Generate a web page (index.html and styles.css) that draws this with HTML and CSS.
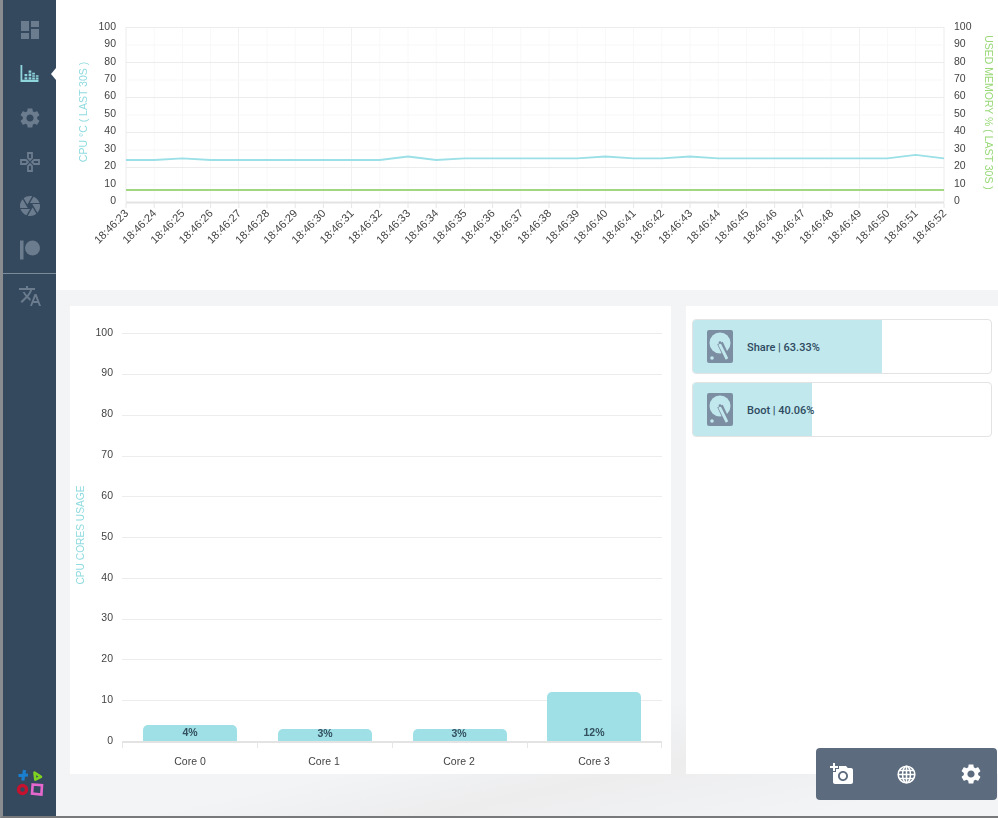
FILE: index.html
```html
<!DOCTYPE html>
<html lang="en">
<head>
    <meta charset="UTF-8">
    <meta name="viewport" content="width=device-width, initial-scale=1.0">
    <link rel="stylesheet" href="styles.css">
    <title>Monitor</title>
</head>
<body>

<div class="app">

    <nav class="sidebar">
        <ul class="menu">
            <li class="menuItem">
                <svg class="navIcon" viewBox="0 0 24 24"><path d="M3 13h8V3H3v10zm0 8h8v-6H3v6zm10 0h8V11h-8v10zm0-18v6h8V3h-8z"/></svg>
            </li>
            <li class="menuItem active">
                <svg class="navIcon" viewBox="0 0 20 20">
                    <path d="M0 0h2v16.500h18V19H0z"/>
                    <path d="M4.500 10h3v2.500h-3zM4.500 13.500h3v2.500h-3zM9 6h3v2.500H9zM9 9.500h3v3H9zM9 13.500h3v2.500H9zM13 8.500h3v2h-3zM13 11.500h3v1.500h-3zM13 14h3v2h-3zM17 11.500h3v1.500h-3zM17 14h3v2h-3z"/>
                </svg>
            </li>
            <li class="menuItem">
                <svg class="navIcon" viewBox="0 0 24 24"><path d="M19.14,12.94c0.04-0.3,0.06-0.61,0.06-0.94c0-0.32-0.02-0.64-0.07-0.94l2.03-1.58c0.18-0.14,0.23-0.41,0.12-0.61 l-1.92-3.32c-0.12-0.22-0.37-0.29-0.59-0.22l-2.39,0.96c-0.5-0.38-1.03-0.7-1.62-0.94L14.4,2.81c-0.04-0.24-0.24-0.41-0.48-0.41 h-3.84c-0.24,0-0.43,0.17-0.47,0.41L9.25,5.35C8.66,5.59,8.12,5.92,7.63,6.29L5.24,5.33c-0.22-0.08-0.47,0-0.59,0.22L2.74,8.87 C2.62,9.08,2.66,9.34,2.86,9.48l2.03,1.58C4.84,11.36,4.8,11.69,4.8,12s0.02,0.64,0.07,0.94l-2.03,1.58 c-0.18,0.14-0.23,0.41-0.12,0.61l1.92,3.32c0.12,0.22,0.37,0.29,0.59,0.22l2.39-0.96c0.5,0.38,1.03,0.7,1.62,0.94l0.36,2.54 c0.05,0.24,0.24,0.41,0.48,0.41h3.84c0.24,0,0.44-0.17,0.47-0.41l0.36-2.54c0.59-0.24,1.13-0.56,1.62-0.94l2.39,0.96 c0.22,0.08,0.47,0,0.59-0.22l1.92-3.32c0.12-0.22,0.07-0.47-0.12-0.61L19.14,12.94z M12,15.6c-1.98,0-3.6-1.62-3.6-3.6 s1.62-3.6,3.6-3.6s3.6,1.62,3.6,3.6S13.98,15.6,12,15.6z"/></svg>
            </li>
            <li class="menuItem">
                <svg class="navIcon" viewBox="0 0 24 24">
                    <path class="outline" d="M10 3h4v5l-2 2-2-2zM3 10h5l2 2-2 2H3zM10 21v-5l2-2 2 2v5zM21 10h-5l-2 2 2 2h5z"/>
                </svg>
            </li>
            <li class="menuItem">
                <svg class="navIcon" viewBox="0 0 24 24"><path d="M9.4 10.500l4.770-8.260C13.470 2.090 12.750 2 12 2c-2.400 0-4.600.85-6.320 2.250l3.660 6.350.06-.1zM21.540 9c-.92-2.920-3.150-5.260-6-6.340L11.880 9h9.660zm.26 1h-7.490l.29.5 4.760 8.250C21 16.970 22 14.600 22 12c0-.69-.07-1.350-.2-2zM8.540 12l-3.900-6.750C3.010 7.030 2 9.390 2 12c0 .69.07 1.350.2 2h7.490l-1.150-2zm-6.080 3c.92 2.920 3.150 5.260 6 6.340L12.120 15H2.460zm11.270 0l-3.900 6.760c.7.15 1.420.24 2.170.24 2.400 0 4.600-.85 6.320-2.250l-3.660-6.350-.93 1.600z"/></svg>
            </li>
            <li class="menuItem">
                <svg class="navIcon" viewBox="0 0 24 24"><path d="M2 2.500h3.500v19H2z"/><circle cx="14.500" cy="10" r="7.500"/></svg>
            </li>
        </ul>
        <div class="menuLine"></div>
        <div class="menuItem">
            <svg class="navIcon" viewBox="0 0 24 24"><path d="M12.870 15.070l-2.540-2.510.03-.03c1.740-1.940 2.980-4.170 3.710-6.530H17V4h-7V2H8v2H1v1.990h11.170C11.500 7.920 10.440 9.750 9 11.350 8.070 10.320 7.300 9.190 6.690 8h-2c.73 1.630 1.730 3.170 2.980 4.560l-5.090 5.020L4 19l5-5 3.110 3.110.76-2.040zM18.500 10h-2L12 22h2l1.120-3h4.750L21 22h2l-4.500-12zm-2.620 7l1.620-4.330L19.120 17h-3.240z"/></svg>
        </div>
        <svg class="logo" viewBox="0 0 28 28">
            <path class="logoCross" d="M8.500 2L6.800 12.500M2.500 7.500L12 7"/>
            <path class="logoTriangle" d="M18.500 4.500L25 8.800l-5.700 2.900z"/>
            <circle class="logoRing" cx="6.500" cy="21.500" r="4"/>
            <path class="logoSquare" d="M16.700 16.500l9.300.7-.6 9.300-9.400-.9z"/>
        </svg>
    </nav>

    <main class="main">

        <section class="topChart">
            <svg class="chartSvg" width="942" height="290" viewBox="56 0 942 290">
                <g class="gridFaint">
                    <path d="M154.200 27v175M182.400 27v175M210.600 27v175M267 27v175M295.200 27v175M323.400 27v175M379.800 27v175M408 27v175M436.200 27v175M464.400 27v175M492.600 27v175M520.800 27v175M549 27v175M577.200 27v175M605.400 27v175M633.600 27v175M661.800 27v175M690 27v175M718.200 27v175M746.400 27v175M774.600 27v175M802.800 27v175M831 27v175M887.400 27v175M915.600 27v175"/>
                </g>
                <path class="gridMid" d="M238.500 27v175M351.500 27v175M859.500 27v175"/>
                <g class="grid">
                    <path d="M126 27.500h818M126 62.500h818M126 97.500h818M126 132.500h818M126 167.500h818M126 27v175M944 27v175"/>
                </g>
                <g class="gridSoft">
                    <path d="M126 45h818M126 80h818M126 115h818M126 150h818M126 185h818"/>
                </g>
                <polyline class="lineCpu" points="126,160 154.200,160 182.400,158.300 210.600,160 238.800,160 267,160 295.200,160 323.400,160 351.600,160 379.800,160 408,156.500 436.200,160 464.400,158.300 492.600,158.300 520.800,158.300 549,158.300 577.200,158.300 605.400,156.500 633.600,158.300 661.800,158.300 690,156.500 718.200,158.300 746.400,158.300 774.600,158.300 802.800,158.300 831,158.300 859.200,158.300 887.400,158.300 915.600,154.800 944,158.300"/>
                <polyline class="lineMem" points="126,190 944,190"/>
                <path class="axis" d="M126 202.500h818"/>
                <path class="tick" d="M126 203v5M154.200 203v5M182.400 203v5M210.600 203v5M238.800 203v5M267 203v5M295.200 203v5M323.400 203v5M351.600 203v5M379.800 203v5M408 203v5M436.200 203v5M464.400 203v5M492.600 203v5M520.800 203v5M549 203v5M577.200 203v5M605.400 203v5M633.600 203v5M661.800 203v5M690 203v5M718.200 203v5M746.400 203v5M774.600 203v5M802.800 203v5M831 203v5M859.200 203v5M887.400 203v5M915.600 203v5M944 203v5"/>

                <g class="yLabels">
                    <text x="116" y="30">100</text><text x="116" y="47">90</text><text x="116" y="65">80</text><text x="116" y="82">70</text><text x="116" y="99">60</text><text x="116" y="117">50</text><text x="116" y="134">40</text><text x="116" y="152">30</text><text x="116" y="169">20</text><text x="116" y="187">10</text><text x="116" y="204">0</text>
                </g>
                <g class="yLabelsRight">
                    <text x="954" y="30">100</text><text x="954" y="47">90</text><text x="954" y="65">80</text><text x="954" y="82">70</text><text x="954" y="99">60</text><text x="954" y="117">50</text><text x="954" y="134">40</text><text x="954" y="152">30</text><text x="954" y="169">20</text><text x="954" y="187">10</text><text x="954" y="204">0</text>
                </g>
                <g class="xLabels">
                    <text transform="translate(129 214) rotate(-45)">18:46:23</text>
                    <text transform="translate(157.200 214) rotate(-45)">18:46:24</text>
                    <text transform="translate(185.400 214) rotate(-45)">18:46:25</text>
                    <text transform="translate(213.600 214) rotate(-45)">18:46:26</text>
                    <text transform="translate(241.800 214) rotate(-45)">18:46:27</text>
                    <text transform="translate(270 214) rotate(-45)">18:46:28</text>
                    <text transform="translate(298.200 214) rotate(-45)">18:46:29</text>
                    <text transform="translate(326.400 214) rotate(-45)">18:46:30</text>
                    <text transform="translate(354.600 214) rotate(-45)">18:46:31</text>
                    <text transform="translate(382.800 214) rotate(-45)">18:46:32</text>
                    <text transform="translate(411 214) rotate(-45)">18:46:33</text>
                    <text transform="translate(439.200 214) rotate(-45)">18:46:34</text>
                    <text transform="translate(467.400 214) rotate(-45)">18:46:35</text>
                    <text transform="translate(495.600 214) rotate(-45)">18:46:36</text>
                    <text transform="translate(523.800 214) rotate(-45)">18:46:37</text>
                    <text transform="translate(552 214) rotate(-45)">18:46:38</text>
                    <text transform="translate(580.200 214) rotate(-45)">18:46:39</text>
                    <text transform="translate(608.400 214) rotate(-45)">18:46:40</text>
                    <text transform="translate(636.600 214) rotate(-45)">18:46:41</text>
                    <text transform="translate(664.800 214) rotate(-45)">18:46:42</text>
                    <text transform="translate(693 214) rotate(-45)">18:46:43</text>
                    <text transform="translate(721.200 214) rotate(-45)">18:46:44</text>
                    <text transform="translate(749.400 214) rotate(-45)">18:46:45</text>
                    <text transform="translate(777.600 214) rotate(-45)">18:46:46</text>
                    <text transform="translate(805.800 214) rotate(-45)">18:46:47</text>
                    <text transform="translate(834 214) rotate(-45)">18:46:48</text>
                    <text transform="translate(862.200 214) rotate(-45)">18:46:49</text>
                    <text transform="translate(890.400 214) rotate(-45)">18:46:50</text>
                    <text transform="translate(918.600 214) rotate(-45)">18:46:51</text>
                    <text transform="translate(947 214) rotate(-45)">18:46:52</text>
                </g>
                <text class="axisTitle cpuTitle" transform="translate(87 112) rotate(-90)">CPU °C ( LAST 30S )</text>
                <text class="axisTitle memTitle" transform="translate(985 112.500) rotate(90)">USED MEMORY % ( LAST 30S )</text>
            </svg>
        </section>

        <section class="panels">

            <div class="card coresCard">
                <svg class="chartSvg" width="601" height="468" viewBox="70 306 601 468">
                    <path class="grid" d="M122 333.500h540M122 374.500h540M122 415.500h540M122 456.500h540M122 496.500h540M122 537.500h540M122 578.500h540M122 619.500h540M122 659.500h540M122 700.500h540"/>
                    <g class="yLabels">
                        <text x="113" y="336">100</text><text x="113" y="376">90</text><text x="113" y="417">80</text><text x="113" y="458">70</text><text x="113" y="499">60</text><text x="113" y="540">50</text><text x="113" y="581">40</text><text x="113" y="621">30</text><text x="113" y="662">20</text><text x="113" y="703">10</text><text x="113" y="744">0</text>
                    </g>
                    <path class="bar" d="M143 742v-12a5 5 0 0 1 5-5h84a5 5 0 0 1 5 5v12z"/>
                    <path class="bar" d="M278 742v-8a5 5 0 0 1 5-5h84a5 5 0 0 1 5 5v8z"/>
                    <path class="bar" d="M413 742v-8a5 5 0 0 1 5-5h84a5 5 0 0 1 5 5v8z"/>
                    <path class="bar" d="M547 742v-45a5 5 0 0 1 5-5h84a5 5 0 0 1 5 5v45z"/>
                    <path class="axis" d="M122 742h540"/>
                    <path class="tick" d="M122.500 742v6M257.500 742v6M392.500 742v6M527.500 742v6M661.500 742v6"/>
                    <g class="barLabels">
                        <text x="190" y="736">4%</text><text x="325" y="737">3%</text><text x="459" y="737">3%</text><text x="594" y="736">12%</text>
                    </g>
                    <g class="catLabels">
                        <text x="190" y="765">Core 0</text><text x="324" y="765">Core 1</text><text x="459" y="765">Core 2</text><text x="594" y="765">Core 3</text>
                    </g>
                    <text class="axisTitle cpuTitle coresTitle" transform="translate(84 535) rotate(-90)">CPU CORES USAGE</text>
                </svg>
            </div>

            <div class="card disksCard">
                <div class="disk">
                    <div class="diskFill" style="width: 63.33%"></div>
                    <svg class="hddIcon" viewBox="0 0 26 33">
                        <rect width="26" height="33" rx="2"/>
                        <circle class="hddDisc" cx="13" cy="13" r="10.500"/>
                        <path class="hddCut" d="M13 13l7.500 16"/>
                        <path class="hddArm" d="M12.500 14l7.500 15"/>
                        <circle cx="13" cy="12.500" r="1.300"/>
                        <circle class="hddDisc" cx="5" cy="28" r="1.800"/>
                    </svg>
                    <span class="diskLabel">Share | 63.33%</span>
                </div>
                <div class="disk">
                    <div class="diskFill" style="width: 40.06%"></div>
                    <svg class="hddIcon" viewBox="0 0 26 33">
                        <rect width="26" height="33" rx="2"/>
                        <circle class="hddDisc" cx="13" cy="13" r="10.500"/>
                        <path class="hddCut" d="M13 13l7.500 16"/>
                        <path class="hddArm" d="M12.500 14l7.500 15"/>
                        <circle cx="13" cy="12.500" r="1.300"/>
                        <circle class="hddDisc" cx="5" cy="28" r="1.800"/>
                    </svg>
                    <span class="diskLabel">Boot | 40.06%</span>
                </div>
            </div>

        </section>
    </main>

    <div class="actions">
        <svg class="actionIcon" viewBox="0 0 24 24"><path d="M3 4V1h2v3h3v2H5v3H3V6H0V4h3zm3 6V7h3V4h7l1.830 2H21c1.100 0 2 .9 2 2v12c0 1.100-.9 2-2 2H5c-1.100 0-2-.9-2-2V10h3zm7 9c2.760 0 5-2.240 5-5s-2.240-5-5-5-5 2.240-5 5 2.240 5 5 5zm-3.200-5c0 1.770 1.430 3.200 3.200 3.200s3.200-1.430 3.200-3.200-1.430-3.200-3.200-3.200-3.200 1.430-3.200 3.200z"/></svg>
        <svg class="actionIcon globe" viewBox="0 0 24 24">
            <circle cx="12" cy="12" r="9.500"/>
            <ellipse cx="12" cy="12" rx="4.500" ry="9.500"/>
            <path d="M12 2.500v19M2.500 12h19M3.800 7.500h16.400M3.800 16.500h16.400"/>
        </svg>
        <svg class="actionIcon" viewBox="0 0 24 24"><path d="M19.140,12.940c0.040-0.300,0.060-0.610,0.060-0.940c0-0.320-0.020-0.640-0.070-0.940l2.030-1.580c0.180-0.140,0.230-0.410,0.120-0.610 l-1.920-3.320c-0.120-0.220-0.370-0.290-0.590-0.220l-2.390,0.960c-0.500-0.380-1.030-0.700-1.620-0.940L14.400,2.810c-0.040-0.240-0.240-0.410-0.480-0.410 h-3.840c-0.240,0-0.430,0.170-0.470,0.410L9.250,5.350C8.660,5.590,8.120,5.920,7.630,6.290L5.240,5.330c-0.220-0.080-0.470,0-0.590,0.220L2.740,8.870 C2.620,9.080,2.660,9.340,2.860,9.480l2.030,1.580C4.840,11.360,4.800,11.690,4.800,12s0.020,0.640,0.070,0.940l-2.030,1.580 c-0.180,0.140-0.230,0.410-0.120,0.610l1.920,3.320c0.120,0.220,0.370,0.290,0.590,0.220l2.390-0.960c0.500,0.380,1.030,0.700,1.620,0.940l0.360,2.540 c0.050,0.240,0.240,0.410,0.480,0.410h3.840c0.240,0,0.440-0.170,0.470-0.410l0.360-2.540c0.590-0.240,1.130-0.560,1.620-0.940l2.390,0.960 c0.220,0.080,0.470,0,0.590-0.220l1.920-3.320c0.120-0.220,0.070-0.470-0.120-0.610L19.140,12.940z M12,15.600c-1.980,0-3.600-1.620-3.600-3.600 s1.620-3.600,3.600-3.600s3.600,1.620,3.600,3.600S13.980,15.600,12,15.600z"/></svg>
    </div>

</div>

</body>
</html>
```

FILE: styles.css
```css
body {
    margin: 0;
    font-family: "Liberation Sans", sans-serif;
    overflow: hidden;
}

.app {
    position: relative;
    display: flex;
    height: 816px;
    border-left: 3px solid #8a8d90;
    border-bottom: 2px solid #77797b;
    overflow: hidden;
}

/* sidebar */
.sidebar {
    display: flex;
    flex-direction: column;
    align-items: center;
    flex: 0 0 53px;
    background: #34495e;
}

.menu {
    list-style: none;
    margin: 0;
    padding: 8px 0 0 0;
    width: 100%;
}

.menuItem {
    position: relative;
    display: flex;
    align-items: center;
    justify-content: center;
    height: 44px;
}

.navIcon {
    width: 24px;
    height: 24px;
    fill: #6b7c8e;
}

.navIcon .outline {
    fill: none;
    stroke: #6b7c8e;
    stroke-width: 1.800;
}

.active .navIcon {
    width: 19px;
    height: 18px;
    fill: #8fd6dc;
}

.active::after {
    content: "";
    position: absolute;
    right: 0;
    top: 16px;
    border: 6px solid transparent;
    border-right: 5px solid #fff;
    border-left: 0;
}

.menuLine {
    width: 100%;
    height: 1px;
    margin-top: 1px;
    background: #7b8b9a;
}

.sidebar > .menuItem {
    width: 100%;
}

.logo {
    width: 28px;
    height: 28px;
    margin-top: auto;
    margin-bottom: 20px;
}

.logoCross {
    fill: none;
    stroke: #1b7fd0;
    stroke-width: 3.200;
}

.logoTriangle {
    fill: none;
    stroke: #7ed321;
    stroke-width: 2.600;
    stroke-linejoin: round;
}

.logoRing {
    fill: none;
    stroke: #c4122f;
    stroke-width: 3.400;
}

.logoSquare {
    fill: none;
    stroke: #e668cf;
    stroke-width: 2.600;
}

/* main area */
.main {
    flex: 1;
    display: flex;
    flex-direction: column;
    background: linear-gradient(168deg, #f2f4f5 0%, #f2f4f5 82%, #ededee 88%, #f2f4f5 96%);
}

.topChart {
    height: 290px;
    background: #fff;
}

.chartSvg {
    display: block;
    will-change: transform;
}

.grid {
    fill: none;
    stroke: #ececec;
    stroke-width: 1;
}

.gridSoft {
    fill: none;
    stroke: #f7f7f7;
}

.gridFaint {
    fill: none;
    stroke: #f8f8f8;
}

.gridMid {
    fill: none;
    stroke: #f1f1f1;
}

.axis {
    fill: none;
    stroke: #e3e3e3;
    stroke-width: 2;
}

.tick {
    fill: none;
    stroke: #e6e6e6;
}

.lineCpu {
    fill: none;
    stroke: #9be0e6;
    stroke-width: 1.800;
}

.lineMem {
    fill: none;
    stroke: #a3d682;
    stroke-width: 1.800;
}

.yLabels text,
.yLabelsRight text,
.catLabels text {
    font-size: 10.500px;
    fill: #444;
}

.xLabels text {
    font-size: 11px;
    fill: #444;
    text-anchor: end;
}

.yLabels text {
    text-anchor: end;
}

.catLabels text {
    text-anchor: middle;
}

.barLabels text {
    font-size: 10.500px;
    font-weight: bold;
    fill: #33505f;
    text-anchor: middle;
}

.axisTitle {
    font-size: 10.500px;
    text-anchor: middle;
}

.coresTitle {
    font-size: 10.200px;
}

.cpuTitle {
    fill: #8fdbe0;
}

.memTitle {
    fill: #98d877;
}

.bar {
    fill: #9fe0e6;
}

/* bottom cards */
.panels {
    display: grid;
    grid-template-columns: 601px 312px;
    gap: 15px;
    padding: 16px 0 0 14px;
}

.card {
    height: 468px;
    background: #fff;
}

.disksCard {
    display: flex;
    flex-direction: column;
    gap: 8px;
    padding: 13px 6px 0 6px;
    box-sizing: border-box;
}

.disk {
    position: relative;
    display: flex;
    align-items: center;
    height: 55px;
    border: 1px solid #e3e3e3;
    border-radius: 4px;
    box-sizing: border-box;
    overflow: hidden;
}

.diskFill {
    position: absolute;
    left: 0;
    top: 0;
    bottom: 0;
    background: #c0e8ed;
}

.hddIcon {
    position: relative;
    width: 26px;
    height: 33px;
    margin-left: 14px;
    fill: #7c8ea2;
}

.hddDisc {
    fill: #c0e8ed;
}

.hddCut {
    fill: none;
    stroke: #7c8ea2;
    stroke-width: 6;
}

.hddArm {
    fill: none;
    stroke: #c0e8ed;
    stroke-width: 2.800;
}

.diskLabel {
    position: relative;
    top: 1px;
    margin-left: 14px;
    font-family: Roboto, sans-serif;
    font-size: 11px;
    font-weight: 500;
    color: #2f4a60;
}

/* floating buttons */
.actions {
    position: absolute;
    right: 1px;
    bottom: 16px;
    display: flex;
    align-items: center;
    justify-content: space-between;
    box-sizing: border-box;
    width: 181px;
    height: 52px;
    padding: 0 14px 0 14px;
    background: #5c6b7e;
    border-radius: 4px;
}

.actionIcon {
    width: 24px;
    height: 24px;
    fill: #fff;
}

.actionIcon.globe {
    width: 21px;
    height: 21px;
    fill: none;
    stroke: #fff;
    stroke-width: 1.800;
}
```
